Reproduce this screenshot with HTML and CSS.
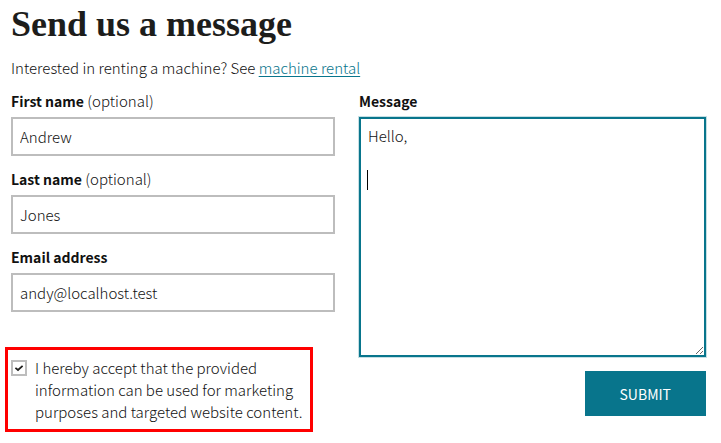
FILE: index.html
```html
<!DOCTYPE html>
<html lang="en">
<head>
<meta charset="utf-8">
<meta name="viewport" content="width=device-width, initial-scale=1">
<title>Send us a message</title>
<link rel="stylesheet" href="styles.css">
</head>
<body>
<main class="contact">
  <h1 class="contact-title">Send us a message</h1>
  <p class="contact-intro">Interested in renting a machine? See <a href="#rental">machine rental</a></p>
  <form class="contact-form">
    <div class="column">
      <div class="field">
        <label for="first"><strong>First name</strong> (optional)</label>
        <input class="control" id="first" type="text" value="Andrew">
      </div>
      <div class="field">
        <label for="last"><strong>Last name</strong> (optional)</label>
        <input class="control" id="last" type="text" value="Jones">
      </div>
      <div class="field">
        <label for="email"><strong>Email address</strong></label>
        <input class="control" id="email" type="email" value="andy@localhost.test">
      </div>
      <div class="consent">
        <span class="tick">
          <input id="consent" type="checkbox" checked>
          <svg viewBox="0 0 12 12" aria-hidden="true"><path d="M2.4 5.8 5 8 9.6 3.8"/></svg>
        </span>
        <label for="consent">I hereby accept that the provided information can be used for marketing purposes and targeted website content.</label>
      </div>
    </div>
    <div class="column">
      <div class="field">
        <label for="message"><strong>Message</strong></label>
        <div class="message-box">
          <textarea class="control message" id="message">Hello,

</textarea>
          <span class="caret"></span>
        </div>
      </div>
      <button class="submit" type="submit">SUBMIT</button>
    </div>
  </form>
</main>
</body>
</html>
```
FILE: styles.css
```css
* {
  box-sizing: border-box;
}

body {
  margin: 0;
  background: #fff;
  color: #111;
  font: 300 15px/22px "Noto Sans CJK SC", "Open Sans", sans-serif;
}

.contact {
  padding: 4px 15px 11px 11px;
}

.contact-title {
  margin: 0 0 13px;
  color: #1d1d1b;
  font: bold 36px/40px "Liberation Serif", serif;
}

.contact-intro {
  margin: 0 0 11px;
}

.contact-intro a {
  color: #08758c;
  text-underline-offset: 2px;
}

strong {
  font-size: 14px;
  font-weight: 700;
}

.contact-form {
  display: grid;
  grid-template-columns: minmax(0, 324fr) minmax(0, 347fr);
  column-gap: 24px;
  align-items: start;
}

.column {
  display: flex;
  flex-direction: column;
}

.field {
  display: flex;
  flex-direction: column;
  gap: 5px;
  margin-bottom: 12px;
}

.control {
  width: 100%;
  height: 39px;
  margin: 0;
  padding: 6px 7px 7px;
  border: 2px solid #bdbdbd;
  border-radius: 0;
  outline: 0;
  background: #fff;
  color: inherit;
  font: inherit;
}

.message-box {
  position: relative;
}

.message {
  display: block;
  height: 240px;
  border-color: #08758c;
  box-shadow: 0 0 0 1px #c5dfe4;
  resize: both;
}

.caret {
  position: absolute;
  top: 53px;
  left: 8px;
  width: 1px;
  height: 20px;
  background: #000;
}

.consent {
  display: flex;
  gap: 8px;
  max-width: 308px;
  margin: 23px 0 0 -6px;
  padding: 7px 3px 6px;
  border: 3px solid #f00;
}

.tick {
  position: relative;
  flex: none;
  width: 16px;
  height: 16px;
  margin-top: 3px;
}

.tick input {
  display: block;
  width: 16px;
  height: 16px;
  margin: 0;
  appearance: none;
  border: 2px solid #bdbdbd;
  background: #fff;
}

.tick svg {
  position: absolute;
  inset: 2px;
  width: 12px;
  height: 12px;
  fill: none;
  stroke: #1d1d1b;
  stroke-width: 1.7;
  pointer-events: none;
}

.tick input:not(:checked) + svg {
  display: none;
}

.submit {
  align-self: flex-end;
  margin-top: 2px;
  padding: 12px 35px 11px;
  border: 0;
  background: #08758c;
  color: #fff;
  font: 400 14px/22px "Noto Sans CJK SC", "Open Sans", sans-serif;
}
```
